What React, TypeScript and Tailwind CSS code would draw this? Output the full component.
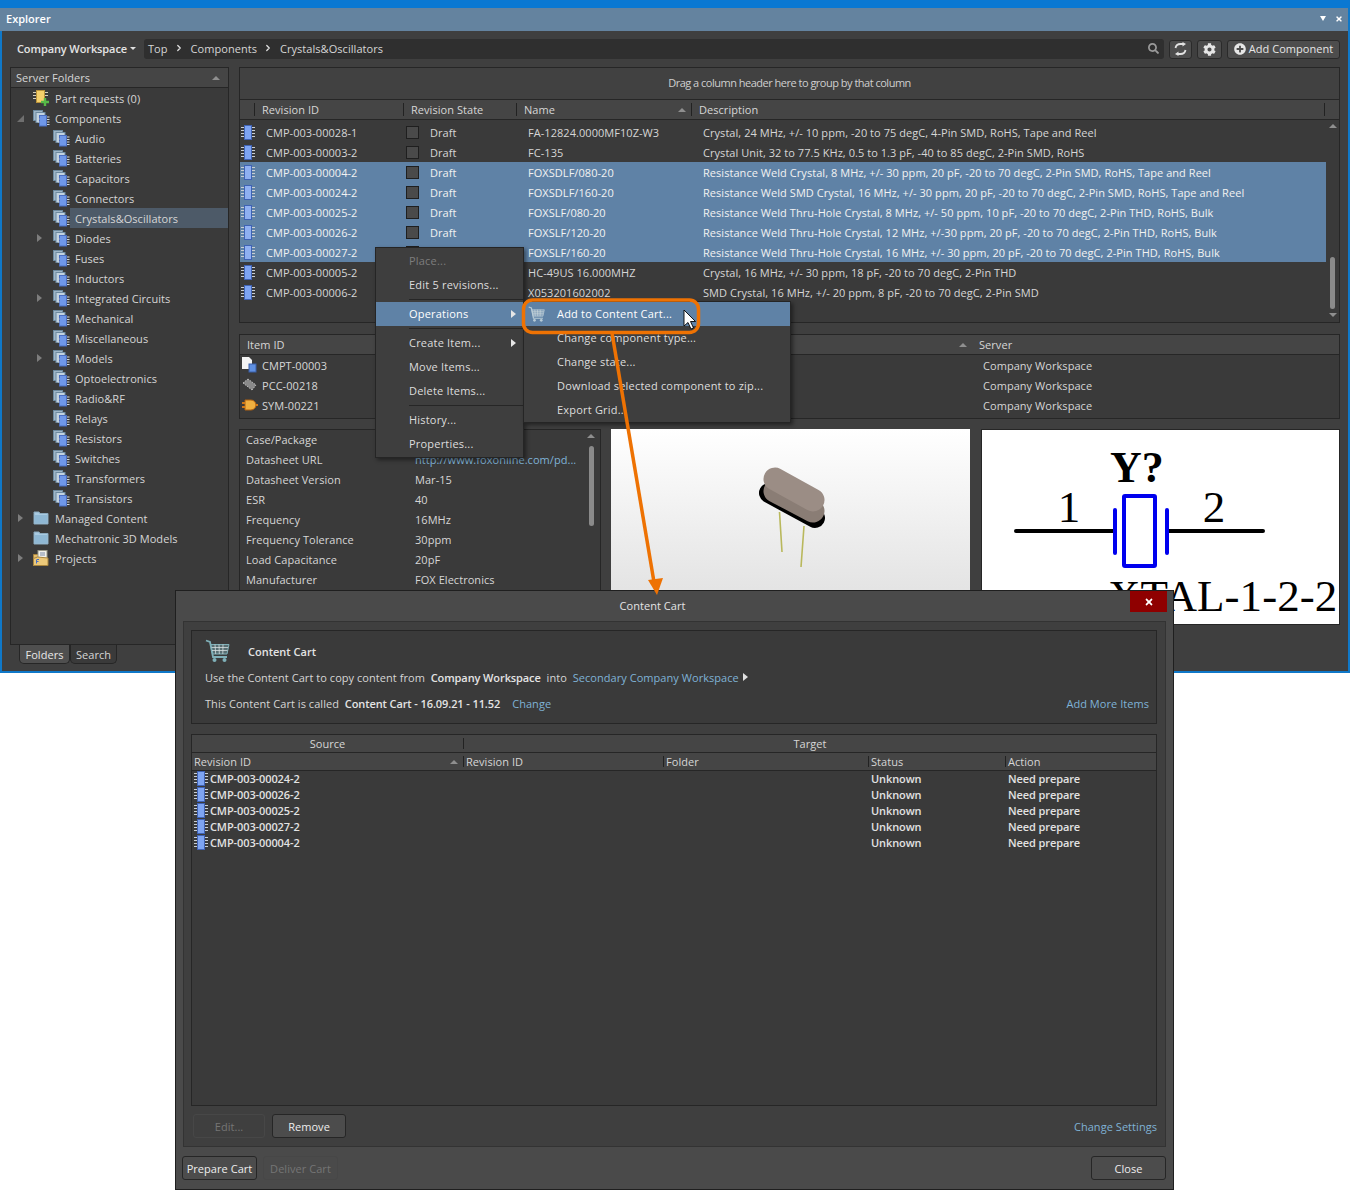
import { ChevronRight } from "lucide-react";
import { FaCog, FaPlusCircle, FaSearch, FaTimes } from "react-icons/fa";

const FONT = "font-['Open_Sans','Noto_Sans',sans-serif]";

//Icons
const StackIcon = () => (
  <svg width="17" height="17" viewBox="0 0 17 17" className="shrink-0">
    <rect x="0.5" y="0.5" width="9" height="10" fill="#9fb6c8" stroke="#6d8aa0" />
    <rect x="3" y="2.5" width="9" height="10" fill="#c3d3e0" stroke="#6d8aa0" />
    <rect x="6.5" y="5.5" width="7" height="10.5" fill="#6f97e8" stroke="#4a6ec0" />
    <path d="M14 7h2.5M14 9.5h2.5M14 12h2.5M14 14.5h2.5M4.500 9h2M4.500 12h2" stroke="#cfd6dc" />
  </svg>
);

const ChipIcon = ({ selected }: { selected?: boolean }) => (
  <svg width="14" height="15" viewBox="0 0 14 15" className="shrink-0">
    <rect x="3.5" y="0.5" width="7" height="14" fill={selected ? "#8fb0f2" : "#7ea4f2"} stroke="#3f62b4" />
    <path d="M0 2.5h3M0 5.500h3M0 8.500h3M0 11.500h3M11 2.500h3M11 5.500h3M11 8.500h3M11 11.500h3" stroke="#c9ced4" />
  </svg>
);

const FolderIcon = () => (
  <svg width="16" height="14" viewBox="0 0 16 14" className="shrink-0">
    <path d="M1 2.500V1h5l1 1.500h8V13H1z" fill="#a9cbe2" stroke="#8aa9bd" />
    <rect x="1.500" y="4" width="13" height="8.500" fill="#8fb8d4" />
  </svg>
);

const PartRequestIcon = () => (
  <svg width="17" height="17" viewBox="0 0 17 17" className="shrink-0">
    <rect x="3.500" y="0.500" width="8" height="12" fill="#f4cf6a" stroke="#b8913a" />
    <path d="M0 2.500h3M0 5.500h3M0 8.500h3M12 2.500h3M12 5.500h3" stroke="#d6d0bc" />
    <path d="M12 8v8M8 12h8" stroke="#57b947" strokeWidth="2.400" />
  </svg>
);

const ProjectsIcon = () => (
  <svg width="16" height="16" viewBox="0 0 16 16" className="shrink-0">
    <path d="M0.500 4.500h5v11h-5z" fill="#e3bd6c" stroke="#a9853d" />
    <rect x="5" y="0.500" width="9" height="9" fill="#f2f2ea" stroke="#9a9a8a" />
    <path d="M7 3h5M7 5h5" stroke="#7a8aa8" />
    <path d="M0.500 8.500l4-1.500 10.500 1v7.500H0.500z" fill="#ecc97a" stroke="#a9853d" />
    <path d="M4 9.500h2M3.500 9.500v4M3.500 11.500h2" stroke="#4a6ec0" />
  </svg>
);

const CartIcon = ({ size = 25, color = "#7fb0b8" }: { size?: number; color?: string }) => (
  <svg width={size} height={size} viewBox="0 0 25 25" fill="none" className="shrink-0">
    <path d="M1 1.500l4 1.500 3 15h14" stroke={color} strokeWidth="1.800" />
    <path d="M5.500 5.500H24l-2 9.500H7.500z" fill={color} fillOpacity="0.45" stroke={color} />
    <path d="M6.500 8.500h16.500M7 11.500h15.500M10 5.500l.7 9.500M14 5.500l.3 9.500M18 5.500l-.2 9.500" stroke="#d4dedf" strokeWidth="0.800" />
    <circle cx="9.500" cy="21" r="2" fill={color} />
    <circle cx="19.500" cy="21" r="2" fill={color} />
  </svg>
);

const SyncIcon = () => (
  <svg width="13" height="14" viewBox="0 0 13 14" fill="none">
    <path d="M1.500 6C2 3 4 2 6.500 2H9" stroke="#e2e2e2" strokeWidth="1.800" />
    <path d="M8.500 0l3.500 2-3.500 2.500z" fill="#e2e2e2" />
    <path d="M11.500 8C11 11 9 12 6.500 12H4" stroke="#e2e2e2" strokeWidth="1.800" />
    <path d="M4.500 9.500L1 12l3.500 2z" fill="#e2e2e2" />
  </svg>
);

const ArrowRight = ({ color = "#9a9a9a" }: { color?: string }) => (
  <span className="block h-0 w-0 border-y-[4px] border-l-[5px] border-y-transparent" style={{ borderLeftColor: color }} />
);

const SortUp = () => (
  <span className="block h-0 w-0 border-x-[4px] border-b-[4px] border-x-transparent border-b-[#8f8f8f]" />
);

const HeaderCell = ({ label, width, arrow }: { label: string; width: string; arrow?: boolean }) => (
  <div className={`${width} flex h-full shrink-0 items-center justify-between pr-[5px] pl-[7px]`}>
    <span>{label}</span>
    {arrow && <SortUp />}
  </div>
);

const GridDivider = () => <span className="mr-[2px] ml-[1px] h-[11px] w-px shrink-0 bg-[#222]" />;

//Arrays
const tree = [
  { name: "Audio" },
  { name: "Batteries" },
  { name: "Capacitors" },
  { name: "Connectors" },
  { name: "Crystals&Oscillators", active: true },
  { name: "Diodes", arrow: true },
  { name: "Fuses" },
  { name: "Inductors" },
  { name: "Integrated Circuits", arrow: true },
  { name: "Mechanical" },
  { name: "Miscellaneous" },
  { name: "Models", arrow: true },
  { name: "Optoelectronics" },
  { name: "Radio&RF" },
  { name: "Relays" },
  { name: "Resistors" },
  { name: "Switches" },
  { name: "Transformers" },
  { name: "Transistors" },
];

const revisions = [
  { id: "CMP-003-00028-1", name: "FA-12824.0000MF10Z-W3", desc: "Crystal, 24 MHz, +/- 10 ppm, -20 to 75 degC, 4-Pin SMD, RoHS, Tape and Reel" },
  { id: "CMP-003-00003-2", name: "FC-135", desc: "Crystal Unit, 32 to 77.5 KHz, 0.5 to 1.3 pF, -40 to 85 degC, 2-Pin SMD, RoHS" },
  { id: "CMP-003-00004-2", name: "FOXSDLF/080-20", desc: "Resistance Weld Crystal, 8 MHz, +/- 30 ppm, 20 pF, -20 to 70 degC, 2-Pin SMD, RoHS, Tape and Reel", selected: true },
  { id: "CMP-003-00024-2", name: "FOXSDLF/160-20", desc: "Resistance Weld SMD Crystal, 16 MHz, +/- 30 ppm, 20 pF, -20 to 70 degC, 2-Pin SMD, RoHS, Tape and Reel", selected: true },
  { id: "CMP-003-00025-2", name: "FOXSLF/080-20", desc: "Resistance Weld Thru-Hole Crystal, 8 MHz, +/- 50 ppm, 10 pF, -20 to 70 degC, 2-Pin THD, RoHS, Bulk", selected: true },
  { id: "CMP-003-00026-2", name: "FOXSLF/120-20", desc: "Resistance Weld Thru-Hole Crystal, 12 MHz, +/-30 ppm, 20 pF, -20 to 70 degC, 2-Pin THD, RoHS, Bulk", selected: true },
  { id: "CMP-003-00027-2", name: "FOXSLF/160-20", desc: "Resistance Weld Thru-Hole Crystal, 16 MHz, +/- 30 ppm, 20 pF, -20 to 70 degC, 2-Pin THD, RoHS, Bulk", selected: true },
  { id: "CMP-003-00005-2", name: "HC-49US 16.000MHZ", desc: "Crystal, 16 MHz, +/- 30 ppm, 18 pF, -20 to 70 degC, 2-Pin THD" },
  { id: "CMP-003-00006-2", name: "X053201602002", desc: "SMD Crystal, 16 MHz, +/- 20 ppm, 8 pF, -20 to 70 degC, 2-Pin SMD" },
];

const properties = [
  ["Case/Package", ""],
  ["Datasheet URL", "http://www.foxonline.com/pd..."],
  ["Datasheet Version", "Mar-15"],
  ["ESR", "40"],
  ["Frequency", "16MHz"],
  ["Frequency Tolerance", "30ppm"],
  ["Load Capacitance", "20pF"],
  ["Manufacturer", "FOX Electronics"],
];

const cartItems = ["CMP-003-00024-2", "CMP-003-00026-2", "CMP-003-00025-2", "CMP-003-00027-2", "CMP-003-00004-2"];

const TreeRow = ({ name, active, arrow }: { name: string; active?: boolean; arrow?: boolean }) => (
  <div className="flex h-5 items-center">
    <div className="flex w-[42px] shrink-0 justify-end pr-[11px]">{arrow && <ArrowRight color="#7d7d7d" />}</div>
    <StackIcon />
    <div className={`flex h-5 flex-1 items-center pl-[5px] ${active ? "bg-[#4d5a68]" : ""}`}>{name}</div>
  </div>
);

const TopTreeRow = ({ icon, name, arrow }: { icon: React.ReactNode; name: string; arrow?: "right" | "down" }) => (
  <div className="flex h-5 items-center">
    <div className="flex w-[19px] shrink-0 justify-center">
      {arrow === "right" && <ArrowRight color="#7d7d7d" />}
      {arrow === "down" && (
        <svg width="7" height="7" viewBox="0 0 7 7">
          <path d="M7 0V7H0Z" fill="#6f6f6f" />
        </svg>
      )}
    </div>
    <div className="flex w-[22px] shrink-0 justify-center">{icon}</div>
    <div className="ml-[3px]">{name}</div>
  </div>
);

const MenuItem = ({ label, disabled, active, arrow, icon }: { label: string; disabled?: boolean; active?: boolean; arrow?: boolean; icon?: boolean }) => (
  <div className={`flex h-6 items-center ${active ? "bg-[#5f82a6] text-white" : ""} ${disabled ? "text-[#7d7d7d]" : ""}`}>
    <div className="flex w-[33px] shrink-0 pl-[4px]">{icon && <CartIcon size={17} color="#b8cbd6" />}</div>
    <div className="flex-1 pb-[2px]">{label}</div>
    {arrow && <div className="pr-[7px]"><ArrowRight color="#e6e6e6" /></div>}
  </div>
);

const MenuSep = () => <div className="my-[2px] ml-[33px] h-px bg-[#262626]" />;

const DarkButton = ({ label, width, disabled }: { label: string; width: string; disabled?: boolean }) => (
  <div className={`${width} flex h-6 items-center justify-center rounded-[3px] border ${disabled ? "border-[#474747] text-[#757575]" : "border-[#262626] bg-[#4c4c4c] text-[#eeeeee]"}`}>
    {label}
  </div>
);

export default function App() {
  return (
    <div className={`${FONT} relative h-[1190px] w-[1350px] overflow-hidden bg-white text-[11px] leading-none tracking-[0.05px] text-[#d6d6d6]`}>
      {/* Explorer window */}
      <div className="flex h-[673px] flex-col border-x-2 border-b-2 border-[#0f78c8] bg-[#3f3f3f]">
        <div className="-mx-[2px] h-2 shrink-0 bg-[#0a78d2]" />
        <div className="-ml-[2px] flex h-[23px] shrink-0 items-center justify-between bg-[#64839f] pr-[5px] pb-[2px] pl-[6px] text-white">
          <span className="font-semibold tracking-normal">Explorer</span>
          <div className="flex items-center gap-[9px]">
            <span className="block h-0 w-0 border-x-[3.5px] border-t-[5px] border-x-transparent border-t-white" />
            <FaTimes className="size-[8px]" />
          </div>
        </div>

        {/* Toolbar */}
        <div className="flex h-[36px] shrink-0 items-center pr-[8px] pl-[15px]">
          <div className="flex w-[127px] shrink-0 items-center pb-[2px]">
            <span className="font-semibold tracking-[-0.1px] text-[#e4e4e4]">Company Workspace</span>
            <span className="ml-[3px] block h-0 w-0 border-x-[3px] border-t-[3px] border-x-transparent border-t-[#e0e0e0]" />
          </div>
          <div className="flex h-5 flex-1 items-center rounded-[3px] bg-[#2f2f2f] pr-[5px] pb-[2px] pl-[4px]">
            <span>Top</span>
            <ChevronRight className="mx-[6.5px] size-[10px] text-[#e0e0e0]" strokeWidth={3} />
            <span>Components</span>
            <ChevronRight className="mx-[6.5px] size-[10px] text-[#e0e0e0]" strokeWidth={3} />
            <span>Crystals&amp;Oscillators</span>
            <FaSearch className="ml-auto size-[11px] text-[#9a9a9a]" />
          </div>
          <div className="ml-[5px] flex h-[19px] w-[23px] items-center justify-center rounded-[3px] border border-[#2a2a2a] bg-[#4d4d4d]"><SyncIcon /></div>
          <div className="ml-[5px] flex h-[19px] w-[25px] items-center justify-center rounded-[3px] border border-[#2a2a2a] bg-[#4d4d4d]"><FaCog className="size-[13px] text-[#e6e6e6]" /></div>
          <div className="ml-[5px] flex h-[19px] w-[113px] items-center justify-center gap-[3px] rounded-[3px] border border-[#2a2a2a] bg-[#4d4d4d] pb-[1px] text-[#e6e6e6]">
            <FaPlusCircle className="size-[12px]" />
            <span>Add Component</span>
          </div>
        </div>

        <div className="flex min-h-0 flex-1 pr-[8px] pl-[8px]">
          {/* Left panel */}
          <div className="flex w-[219px] shrink-0 flex-col">
            <div className="flex h-[578px] flex-col border border-[#262626] bg-[#3a3a3a]">
              <div className="flex h-5 shrink-0 items-center justify-between border-b border-[#262626] bg-[#454545] pr-[8px] pl-[5px]">
                <span>Server Folders</span>
                <SortUp />
              </div>
              <div>
                <TopTreeRow icon={<PartRequestIcon />} name="Part requests (0)" />
                <TopTreeRow icon={<StackIcon />} name="Components" arrow="down" />
                {tree.map((item) => (
                  <TreeRow key={item.name} {...item} />
                ))}
                <TopTreeRow icon={<FolderIcon />} name="Managed Content" arrow="right" />
                <TopTreeRow icon={<FolderIcon />} name="Mechatronic 3D Models" />
                <TopTreeRow icon={<ProjectsIcon />} name="Projects" arrow="right" />
              </div>
            </div>
            <div className="ml-[9px] flex h-[19px]">
              <div className="flex w-[51px] items-center justify-center rounded-b-[5px] border border-t-0 border-[#262626] bg-[#4f4f4f] text-[#e8e8e8]">Folders</div>
              <div className="flex w-[47px] items-center justify-center rounded-b-[5px] border border-t-0 border-[#262626] bg-[#3a3a3a]">Search</div>
            </div>
          </div>

          {/* Right column */}
          <div className="ml-[10px] flex min-w-0 flex-1 flex-col">
            <div className="flex h-[256px] shrink-0 flex-col border border-[#262626] bg-[#3a3a3a]">
              <div className="flex h-[32px] shrink-0 items-center justify-center border-b border-[#262626] bg-[#414141] pb-[2px] tracking-[-0.5px] text-[#cfcfcf]">
                Drag a column header here to group by that column
              </div>
              <div className="flex h-5 shrink-0 items-center border-b border-[#262626] bg-[#454545] pl-[14px]">
                <div className="h-[13px] w-px bg-[#222]" />
                <HeaderCell label="Revision ID" width="w-[148px]" />
                <div className="h-[13px] w-px bg-[#222]" />
                <HeaderCell label="Revision State" width="w-[112px]" />
                <div className="h-[13px] w-px bg-[#222]" />
                <HeaderCell label="Name" width="w-[174px]" arrow />
                <div className="h-[13px] w-px bg-[#222]" />
                <HeaderCell label="Description" width="w-[632px]" />
                <div className="h-[13px] w-px bg-[#222]" />
              </div>
              <div className="flex min-h-0 flex-1 pt-[2px]">
                <div className="flex-1 whitespace-nowrap">
                  {revisions.map((row) => (
                    <div key={row.id} className={`flex h-5 items-center ${row.selected ? "bg-[#5f82a6] text-[#f2f2f2]" : ""}`}>
                      <div className="flex w-[26px] shrink-0 justify-start pl-[1px]"><ChipIcon selected={row.selected} /></div>
                      <div className="w-[140px] shrink-0">{row.id}</div>
                      <div className="flex w-[122px] shrink-0 items-center">
                        <span className="size-[13px] border border-[#1f1f1f] bg-[#4a4a4a]" />
                        <span className="ml-[11px]">Draft</span>
                      </div>
                      <div className="w-[175px] shrink-0">{row.name}</div>
                      <div>{row.desc}</div>
                    </div>
                  ))}
                </div>
                <div className="flex w-[13px] shrink-0 flex-col items-center justify-between pt-[2px] pb-[5px]">
                  <SortUp />
                  <div className="mt-[125px] h-[52px] w-[5px] rounded-full bg-[#8a8a8a]" />
                  <span className="block h-0 w-0 border-x-[4px] border-t-[4px] border-x-transparent border-t-[#8f8f8f]" />
                </div>
              </div>
            </div>

            {/* Item table */}
            <div className="mt-[11px] h-[85px] shrink-0 border border-[#262626] bg-[#3a3a3a]">
              <div className="flex h-5 items-center border-b border-[#262626] bg-[#454545] pl-[7px]">
                <span className="flex-1">Item ID</span>
                <SortUp />
                <div className="ml-[12px] w-[360px]">Server</div>
              </div>
              {["CMPT-00003", "PCC-00218", "SYM-00221"].map((id) => (
                <div key={id} className="flex h-5 items-center pl-[1px]">
                  <svg width="18" height="16" viewBox="0 0 18 16" className="shrink-0">
                    {id === "CMPT-00003" && (
                      <>
                        <path d="M1 0h7l3 3v9H1z" fill="#f4f4f4" />
                        <rect x="8" y="7" width="7" height="8" fill="#5f8fe0" stroke="#3a5fa8" />
                      </>
                    )}
                    {id === "PCC-00218" && (
                      <>
                        <path d="M2 6l5-4 8 6-4 5z" fill="#8a8a8a" />
                        <path d="M2 6l5-4M7 2l8 6M15 8l-4 5M11 13L2 6" stroke="#b4b4b4" strokeDasharray="1.500 1" />
                      </>
                    )}
                    {id === "SYM-00221" && (
                      <>
                        <path d="M4 3h6a5 5 0 010 10H4z" fill="#f0b040" stroke="#b06010" />
                        <path d="M1 6h3M1 10h3M14 8h3" stroke="#d07818" strokeWidth="2" />
                      </>
                    )}
                  </svg>
                  <span className="ml-[3px] flex-1">{id}</span>
                  <span className="w-[356px]">Company Workspace</span>
                </div>
              ))}
            </div>

            {/* Bottom panels */}
            <div className="mt-[10px] flex h-[196px] shrink-0">
              <div className="flex h-full w-[362px] shrink-0 border border-[#262626] bg-[#3a3a3a]">
                <div className="-mt-[1px] flex-1 pl-[6px]">
                  {properties.map(([label, value]) => (
                    <div key={label} className="flex h-5 items-center">
                      <span className="w-[169px] shrink-0">{label}</span>
                      <span className={value.startsWith("http") ? "text-[#7fb2d6]" : ""}>{value}</span>
                    </div>
                  ))}
                </div>
                <div className="flex w-[16px] shrink-0 flex-col items-center pt-[4px] pr-[2px]">
                  <SortUp />
                  <div className="mt-[8px] h-[80px] w-[5px] rounded-full bg-[#8a8a8a]" />
                </div>
              </div>
              <div className="ml-[10px] h-full w-[359px] shrink-0 bg-gradient-to-b from-white to-[#dedede]">
                <svg viewBox="611 429 359 196" className="h-full w-full">
                  <path d="M779.500 512L782 552M804 526L801 567" stroke="#b9b85c" strokeWidth="1.600" />
                  <path d="M769 493L815 518" stroke="#000" strokeWidth="20" strokeLinecap="round" />
                  <path d="M775 491L813 511" stroke="#8a7d75" strokeWidth="23" strokeLinecap="round" />
                  <path d="M775 479L813 500" stroke="#9b8d85" strokeWidth="23" strokeLinecap="round" />
                </svg>
              </div>
              <div className="ml-[11px] h-full w-[359px] shrink-0 border border-[#262626] bg-white">
                <svg viewBox="982 430 357 194" className="h-full w-full font-['Liberation_Serif',serif]">
                  <text x="1137" y="482" fontSize="44" fontWeight="700" textAnchor="middle" fill="#000">Y?</text>
                  <text x="1069" y="522" fontSize="45" textAnchor="middle" fill="#000">1</text>
                  <text x="1214" y="522" fontSize="45" textAnchor="middle" fill="#000">2</text>
                  <path d="M1016 531H1114M1168 531H1263" stroke="#000" strokeWidth="4" strokeLinecap="round" />
                  <rect x="1124" y="496" width="31" height="70" fill="none" stroke="#0000ee" strokeWidth="4" rx="1" />
                  <path d="M1115 510V553M1167 510V553" stroke="#0000ee" strokeWidth="4" strokeLinecap="round" />
                  <text x="1108" y="611" fontSize="45" fill="#000">XTAL-1-2-2</text>
                </svg>
              </div>
            </div>
          </div>
        </div>
      </div>

      {/* Context menu */}
      <div className="absolute top-[247px] left-[375px] w-[149px] border border-[#252525] bg-[#3e3e3e] py-[1px] tracking-[0.2px] text-[#dddddd] shadow-[2px_2px_4px_rgba(0,0,0,0.45)]">
        <MenuItem label="Place..." disabled />
        <MenuItem label="Edit 5 revisions..." />
        <MenuSep />
        <MenuItem label="Operations" active arrow />
        <MenuSep />
        <MenuItem label="Create Item..." arrow />
        <MenuItem label="Move Items..." />
        <MenuItem label="Delete Items..." />
        <MenuSep />
        <MenuItem label="History..." />
        <MenuItem label="Properties..." />
      </div>

      {/* Submenu */}
      <div className="absolute top-[301px] left-[523px] w-[268px] border border-[#252525] bg-[#3e3e3e] tracking-[0.2px] text-[#dddddd] shadow-[2px_2px_4px_rgba(0,0,0,0.45)]">
        <MenuItem label="Add to Content Cart..." active icon />
        <MenuItem label="Change component type..." />
        <MenuItem label="Change state..." />
        <MenuItem label="Download selected component to zip..." />
        <MenuItem label="Export Grid..." />
      </div>

      {/* Content Cart dialog */}
      <div className="absolute top-[590px] left-[175px] flex h-[600px] w-[999px] flex-col border border-[#1f1f1f] bg-[#4a4a4a]">
        <div className="relative flex h-[30px] shrink-0 items-center justify-center pb-[2px] text-[#e4e4e4]">
          <span className="mr-[44px]">Content Cart</span>
          <div className="absolute top-0 right-[6px] flex h-[21px] w-[37px] items-center justify-center bg-[#8f0000]">
            <FaTimes className="size-[10px] text-white" />
          </div>
        </div>
        <div className="mx-[7px] flex h-[526px] shrink-0 flex-col border border-[#333] bg-[#3f3f3f] pt-[8px] pr-[8px] pl-[7px]">
          <div className="h-[94px] shrink-0 border border-[#262626] bg-[#3a3a3a] px-[13px] pt-[7px]">
            <div className="flex h-[27px] items-center">
              <CartIcon />
              <span className="ml-[18px] font-semibold tracking-normal text-[#e4e4e4]">Content Cart</span>
            </div>
            <div className="mt-[4px] flex h-4 items-center whitespace-pre">
              <span>Use the Content Cart to copy content from  </span>
              <span className="font-semibold tracking-[-0.1px] text-[#e4e4e4]">Company Workspace</span>
              <span>  into  </span>
              <span className="text-[#7fb2d6]">Secondary Company Workspace</span>
              <span className="ml-[4px]"><ArrowRight color="#e0e0e0" /></span>
            </div>
            <div className="mt-[10px] flex h-4 items-center whitespace-pre">
              <span>This Content Cart is called  </span>
              <span className="font-semibold tracking-[-0.1px] text-[#e4e4e4]">Content Cart - 16.09.21 - 11.52</span>
              <span className="ml-[12px] pt-[1px] text-[#7fb2d6]">Change</span>
              <span className="mr-[-6px] ml-auto text-[#7fb2d6]">Add More Items</span>
            </div>
          </div>

          {/* Cart grid */}
          <div className="mt-[10px] flex h-[372px] shrink-0 flex-col border border-[#262626] bg-[#3a3a3a]">
            <div className="flex h-[18px] shrink-0 items-center border-b border-[#262626] bg-[#454545]">
              <div className="w-[271px] text-center">Source</div>
              <div className="h-[11px] w-px bg-[#222]" />
              <div className="flex-1 text-center">Target</div>
            </div>
            <div className="flex h-[18px] shrink-0 items-center border-b border-[#262626] bg-[#454545] pl-[2px]">
              <div className="flex w-[268px] items-center justify-between pr-[4px]"><span>Revision ID</span><SortUp /></div>
              <div className="flex w-[200px] items-center"><GridDivider />Revision ID</div>
              <div className="flex w-[205px] items-center"><GridDivider />Folder</div>
              <div className="flex w-[137px] items-center"><GridDivider />Status</div>
              <div className="flex flex-1 items-center"><GridDivider />Action</div>
            </div>
            {cartItems.map((id) => (
              <div key={id} className="flex h-4 items-center pb-[2px] pl-[2px] font-semibold tracking-[-0.1px] text-[#e2e2e2]">
                <ChipIcon />
                <span className="ml-[2px] w-[661px]">{id}</span>
                <span className="w-[137px]">Unknown</span>
                <span>Need prepare</span>
              </div>
            ))}
          </div>

          <div className="mt-[8px] flex items-center">
            <div className="ml-[2px]"><DarkButton label="Edit..." width="w-[72px]" disabled /></div>
            <div className="ml-[7px]"><DarkButton label="Remove" width="w-[74px]" /></div>
            <span className="ml-auto text-[#7fb2d6]">Change Settings</span>
          </div>
        </div>
        <div className="flex flex-1 items-center pr-[7px] pl-[6px]">
          <DarkButton label="Prepare Cart" width="w-[75px]" />
          <div className="ml-[6px]"><DarkButton label="Deliver Cart" width="w-[75px]" disabled /></div>
          <div className="ml-auto"><DarkButton label="Close" width="w-[75px]" /></div>
        </div>
      </div>

      {/* Annotation: callout ring, arrow and pointer */}
      <svg className="pointer-events-none absolute top-0 left-0" width="1350" height="1190" viewBox="0 0 1350 1190" fill="none">
        <rect x="523.500" y="300" width="175" height="32.500" rx="9" stroke="#ee7203" strokeWidth="3.500" />
        <path d="M612 333L654 582" stroke="#ee7203" strokeWidth="3.500" />
        <path d="M648 580L663 578L657 595Z" fill="#ee7203" />
        <path d="M684 310V326L688 322.500L691 329L693.500 328L690.500 321.500H695.500Z" fill="#fff" stroke="#000" strokeWidth="0.900" />
      </svg>
    </div>
  );
}
